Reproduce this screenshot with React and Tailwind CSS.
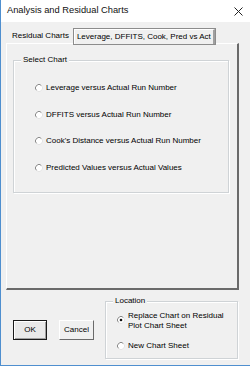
import React from 'react';

const Radio = ({ checked }) => (
    <svg width="8" height="8" viewBox="0 0 8 8" className="shrink-0">
        <circle cx="4" cy="4" r="3.5" fill="#ffffff" />
        <path d="M6.5 1.5 A3.5 3.5 0 0 0 1.5 6.5" fill="none" stroke="#8a8a8a" strokeWidth="1" />
        <path d="M1.5 6.5 A3.5 3.5 0 0 0 6.5 1.5" fill="none" stroke="#e4e4e4" strokeWidth="1" />
        {checked && <circle cx="4" cy="4" r="1.3" fill="#111111" />}
    </svg>
);

const Option = ({ label, checked }) => (
    <div className="flex items-center gap-[3px] h-[10px]">
        <Radio checked={checked} />
        <span className="leading-[10px] whitespace-nowrap">{label}</span>
    </div>
);

const App = () => {
    return (
        <div
            className="w-[250px] h-[366px] bg-[#f0f0f0] border-l border-b border-[#4f8fcf] flex flex-col text-[8px] text-black"
            style={{ fontFamily: '"Liberation Sans", Arial, sans-serif' }}
        >
            {/* Title bar */}
            <div className="h-[22px] bg-white flex items-center justify-between pl-[6px] pr-[7px] shrink-0">
                <span className="text-[9.3px] text-[#111]">Analysis and Residual Charts</span>
                <svg width="9" height="9" viewBox="0 0 9 9">
                    <path d="M0.5 0.5 L8.5 8.5 M8.5 0.5 L0.5 8.5" stroke="#222" strokeWidth="1" />
                </svg>
            </div>

            {/* Tabs */}
            <div className="flex items-end h-[21px] pl-[5px] shrink-0 whitespace-nowrap">
                <div className="h-[14px] flex items-center pl-[6px] pr-[5px]">
                    <span>Residual Charts</span>
                </div>
                <div className="h-[15px] flex items-center px-[2px] bg-[#f0f0f0] border-t border-l border-white border-r-2 border-r-[#a0a0a0] -mb-[1px] relative z-10 outline outline-1 outline-[#8c8c8c]">
                    <span>Leverage, DFFITS, Cook, Pred vs Act</span>
                </div>
            </div>

            {/* Tab page */}
            <div className="ml-[5px] w-[233px] h-[247px] border-t border-l border-white border-r-2 border-b-2 border-r-[#6a6a6a] border-b-[#6a6a6a] pt-[16px] pl-[6px] shrink-0">
                <div className="relative w-[216px] h-[133px] border border-[#cfd3d6] shadow-[1px_1px_0_#ffffff,inset_1px_1px_0_#ffffff]">
                    <span className="absolute -top-[6px] left-[7px] bg-[#f0f0f0] px-[2px] leading-[10px]">Select Chart</span>
                    <div className="flex flex-col gap-[16.5px] pt-[22px] pl-[21px]">
                        <Option label="Leverage versus Actual Run Number" />
                        <Option label="DFFITS versus Actual Run Number" />
                        <Option label="Cook's Distance versus Actual Run Number" />
                        <Option label="Predicted Values versus Actual Values" />
                    </div>
                </div>
            </div>

            {/* Bottom */}
            <div className="flex items-start pl-[12px] pt-[11px]">
                <div className="flex items-center gap-[12px] mt-[19px]">
                    <button className="w-[34px] h-[20px] border border-[#1a1a1a] bg-[#e9e9e9] shadow-[inset_1px_1px_0_#ffffff,inset_-1px_-1px_0_#a0a0a0] flex items-center justify-center">
                        OK
                    </button>
                    <button className="w-[35px] h-[20px] border-t border-l border-white border-r border-b border-r-[#6a6a6a] border-b-[#6a6a6a] bg-[#f0f0f0] flex items-center justify-center">
                        Cancel
                    </button>
                </div>
                <div className="relative ml-[11px] w-[133px] h-[58px] border border-[#cfd3d6] shadow-[1px_1px_0_#ffffff,inset_1px_1px_0_#ffffff]">
                    <span className="absolute -top-[6px] left-[7px] bg-[#f0f0f0] px-[2px] leading-[10px]">Location</span>
                    <div className="flex flex-col pt-[9px] pl-[11px]">
                        <div className="flex items-start gap-[3px]">
                            <div className="mt-[5px]"><Radio checked /></div>
                            <span className="leading-[10px]">Replace Chart on Residual<br />Plot Chart Sheet</span>
                        </div>
                        <div className="flex items-center gap-[3px] mt-[10px]">
                            <Radio />
                            <span className="leading-[10px]">New Chart Sheet</span>
                        </div>
                    </div>
                </div>
            </div>
        </div>
    );
};

export default App;
